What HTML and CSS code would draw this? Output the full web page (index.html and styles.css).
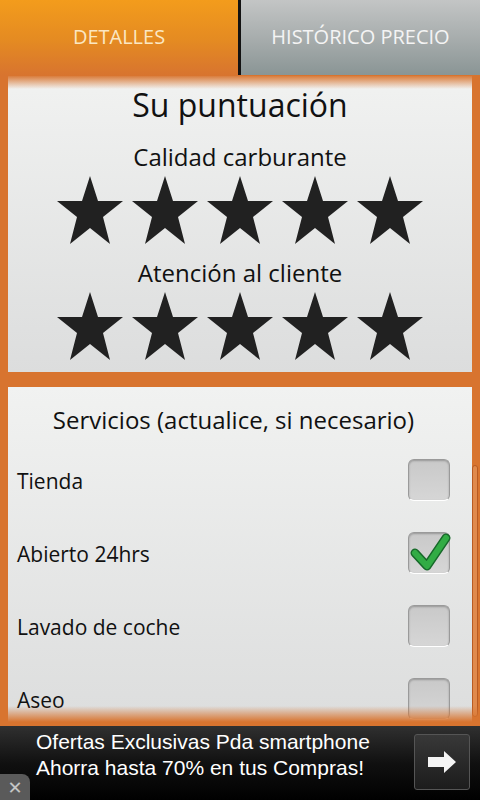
FILE: index.html
```html
<!DOCTYPE html>
<html>
<head>
    <title>Detalles</title>
    <link rel="stylesheet" href="styles.css">
</head>
<body>
    <div class="tabs">
        <div class="tab tab-active">DETALLES</div>
        <div class="tab tab-idle">HISTÓRICO PRECIO</div>
    </div>

    <div class="scroll">
        <div class="panel rating">
            <h1 class="rating-title">Su puntuación</h1>
            <h2 class="rating-sub">Calidad carburante</h2>
            <div class="stars">
                <svg class="star" viewBox="0 0 68 70"><path d="M34 1 L42 26 L67 26 L47 42 L54 69 L34 53 L14 69 L21 42 L1 26 L26 26 Z"/></svg>
                <svg class="star" viewBox="0 0 68 70"><path d="M34 1 L42 26 L67 26 L47 42 L54 69 L34 53 L14 69 L21 42 L1 26 L26 26 Z"/></svg>
                <svg class="star" viewBox="0 0 68 70"><path d="M34 1 L42 26 L67 26 L47 42 L54 69 L34 53 L14 69 L21 42 L1 26 L26 26 Z"/></svg>
                <svg class="star" viewBox="0 0 68 70"><path d="M34 1 L42 26 L67 26 L47 42 L54 69 L34 53 L14 69 L21 42 L1 26 L26 26 Z"/></svg>
                <svg class="star" viewBox="0 0 68 70"><path d="M34 1 L42 26 L67 26 L47 42 L54 69 L34 53 L14 69 L21 42 L1 26 L26 26 Z"/></svg>
            </div>
            <h2 class="rating-sub second">Atención al cliente</h2>
            <div class="stars">
                <svg class="star" viewBox="0 0 68 70"><path d="M34 1 L42 26 L67 26 L47 42 L54 69 L34 53 L14 69 L21 42 L1 26 L26 26 Z"/></svg>
                <svg class="star" viewBox="0 0 68 70"><path d="M34 1 L42 26 L67 26 L47 42 L54 69 L34 53 L14 69 L21 42 L1 26 L26 26 Z"/></svg>
                <svg class="star" viewBox="0 0 68 70"><path d="M34 1 L42 26 L67 26 L47 42 L54 69 L34 53 L14 69 L21 42 L1 26 L26 26 Z"/></svg>
                <svg class="star" viewBox="0 0 68 70"><path d="M34 1 L42 26 L67 26 L47 42 L54 69 L34 53 L14 69 L21 42 L1 26 L26 26 Z"/></svg>
                <svg class="star" viewBox="0 0 68 70"><path d="M34 1 L42 26 L67 26 L47 42 L54 69 L34 53 L14 69 L21 42 L1 26 L26 26 Z"/></svg>
            </div>
        </div>

        <div class="panel services">
            <h2 class="services-title">Servicios (actualice, si necesario)</h2>
            <div class="row">
                <span class="row-label">Tienda</span>
                <span class="check"></span>
            </div>
            <div class="row">
                <span class="row-label">Abierto 24hrs</span>
                <span class="check">
                    <svg class="tick" viewBox="0 0 42 42">
                        <path class="tick-edge" d="M6 21 L18 34 L37 6"/>
                        <path class="tick-fill" d="M6 21 L18 34 L37 6"/>
                    </svg>
                </span>
            </div>
            <div class="row">
                <span class="row-label">Lavado de coche</span>
                <span class="check"></span>
            </div>
            <div class="row">
                <span class="row-label">Aseo</span>
                <span class="check"></span>
            </div>
        </div>

        <div class="scrollbar"></div>
    </div>

    <div class="ad">
        <div class="ad-text">
            <div>Ofertas Exclusivas Pda smartphone</div>
            <div>Ahorra hasta 70% en tus Compras!</div>
        </div>
        <div class="ad-go">
            <svg viewBox="0 0 28 22" width="28" height="22"><path d="M0 6 L16 6 L16 0 L28 11 L16 22 L16 16 L0 16 Z"/></svg>
        </div>
        <div class="ad-close">✕</div>
    </div>
</body>
</html>
```

FILE: styles.css
```css
body {
    margin: 0;
    width: 480px;
    height: 800px;
    overflow: hidden;
    background: #d8742f;
    font-family: "Open Sans", "Noto Sans", sans-serif;
    color: #111;
}
.tabs {
    display: flex;
    height: 75px;
}
.tab {
    display: flex;
    align-items: center;
    justify-content: center;
    font-size: 20px;
    padding-bottom: 3px;
    box-sizing: border-box;
}
.tab-active {
    width: 238px;
    color: #fbe7c2;
    background: linear-gradient(#f39c1c, #e48a22 55%, #d8742f);
}
.tab-idle {
    flex: 1;
    color: #f4f4f4;
    border-left: 3px solid #121212;
    background: linear-gradient(#c3c5c5, #a5abab 55%, #8a9595);
}
.scroll {
    position: relative;
    height: 650px;
    overflow: hidden;
    padding: 1px 8px 0;
}
.scroll::before {
    content: "";
    position: absolute;
    left: 0;
    right: 0;
    top: 0;
    height: 14px;
    background: linear-gradient(#d8742f, rgba(216, 116, 47, 0));
    z-index: 2;
}
.scroll::after {
    content: "";
    position: absolute;
    left: 0;
    right: 0;
    bottom: 0;
    height: 20px;
    background: linear-gradient(rgba(216, 116, 47, 0), #d8742f 80%);
    z-index: 2;
}
.panel {
    background: linear-gradient(#f1f2f1, #dcdddd);
}
.rating {
    height: 296px;
    box-sizing: border-box;
    padding-top: 9px;
    display: flex;
    flex-direction: column;
    align-items: center;
}
.rating-title {
    margin: 0;
    font-size: 32px;
    font-weight: normal;
    line-height: 40px;
}
.rating-sub {
    margin: 16px 0 0;
    font-size: 24px;
    font-weight: normal;
    line-height: 32px;
}
.rating-sub.second {
    margin-top: 12px;
}
.stars {
    display: flex;
    gap: 7px;
    margin-top: 2px;
}
.star {
    width: 68px;
    height: 70px;
    fill: #212121;
}
.services {
    margin-top: 15px;
    padding: 17px 22px 40px 9px;
    background: linear-gradient(#f1f2f1, #dcdddd 340px);
}
.services-title {
    margin: 0 0 7px;
    text-align: center;
    font-size: 24px;
    font-weight: normal;
    line-height: 32px;
}
.row {
    display: flex;
    align-items: center;
    justify-content: space-between;
    height: 73px;
}
.row-label {
    font-size: 21px;
    padding-top: 3px;
}
.check {
    width: 42px;
    height: 42px;
    box-sizing: border-box;
    border: 1px solid #9a9a9a;
    border-bottom-color: #fff;
    border-radius: 6px;
    background: linear-gradient(#c9c9c9, #d6d6d6);
    box-shadow: inset 0 1px 2px rgba(0, 0, 0, 0.25);
    position: relative;
}
.tick {
    position: absolute;
    left: 0;
    top: -1px;
    width: 42px;
    height: 42px;
    fill: none;
    stroke-linecap: round;
    stroke-linejoin: round;
}
.tick-edge {
    stroke: #17692a;
    stroke-width: 9;
}
.tick-fill {
    stroke: #32ac45;
    stroke-width: 6;
}
.scrollbar {
    position: absolute;
    right: 2px;
    top: 390px;
    width: 4px;
    height: 250px;
    border: 1px solid #b95b22;
    border-radius: 3px;
    background: #e08a4d;
}
.ad {
    position: relative;
    height: 75px;
    display: flex;
    align-items: center;
    background: linear-gradient(#303030, #101010 50%, #000);
}
.ad-text {
    flex: 1;
    align-self: flex-start;
    margin: 3px 0 0 36px;
    color: #fff;
    font-family: "Liberation Sans", Arial, sans-serif;
    font-size: 21px;
    line-height: 26px;
}
.ad-go {
    width: 56px;
    height: 56px;
    margin: 0 10px 3px 0;
    box-sizing: border-box;
    border: 1px solid #555;
    border-radius: 3px;
    background: linear-gradient(#383838, #1c1c1c);
    display: flex;
    align-items: center;
    justify-content: center;
    fill: #f4f4f4;
}
.ad-close {
    position: absolute;
    left: 0;
    bottom: 0;
    width: 30px;
    height: 27px;
    border-top-right-radius: 8px;
    background: #5a5a5a;
    color: #c4c4c4;
    font-family: "DejaVu Sans", sans-serif;
    font-size: 18px;
    line-height: 1;
    display: flex;
    align-items: center;
    justify-content: center;
}
```
